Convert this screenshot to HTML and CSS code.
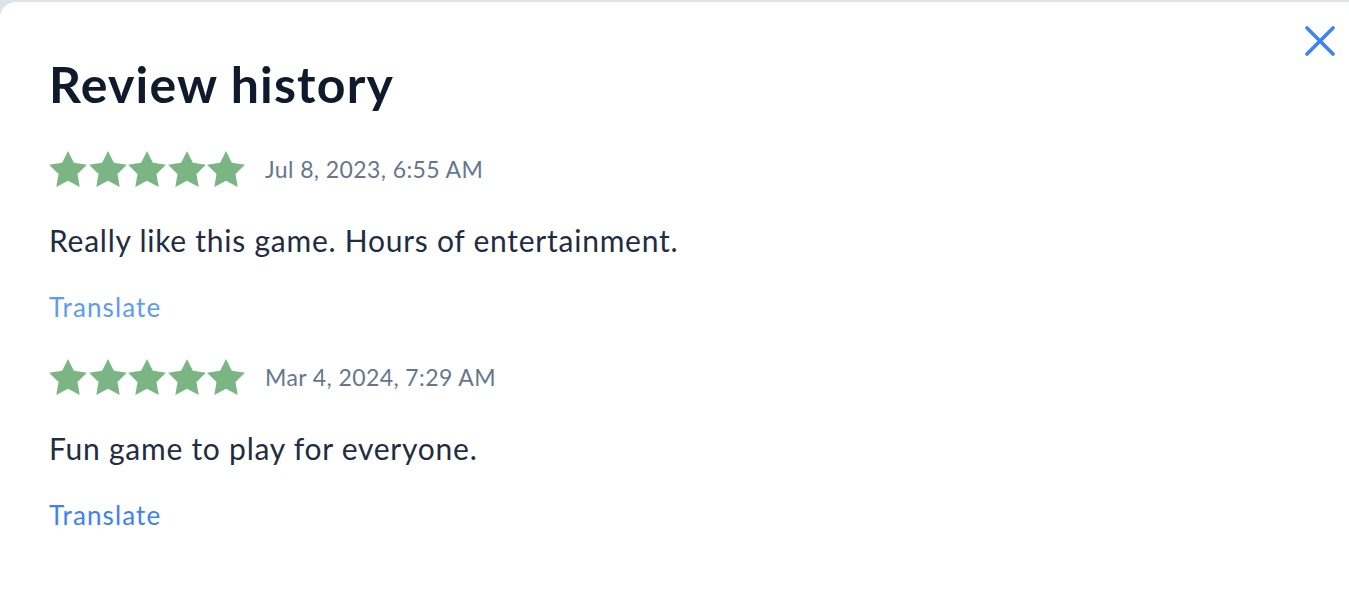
FILE: index.html
```html
<!DOCTYPE html>
<html lang="en">
<head>
<meta charset="utf-8">
<title>Review history</title>
<link rel="stylesheet" href="styles.css">
</head>
<body>
<div class="modal">
  <button class="close" aria-label="Close">
    <svg width="30" height="30" viewBox="0 0 30 30"><path d="M2 2 L28 28 M28 2 L2 28" stroke="#3f82f3" stroke-width="3.6" stroke-linecap="round" fill="none"/></svg>
  </button>
  <h1 class="title">Review history</h1>

  <div class="review">
    <div class="meta">
      <div class="stars">
        <svg class="star" viewBox="2 2 20 19.02"><polygon points="12,2 15.09,8.26 22,9.27 17,14.14 18.18,21.02 12,17.77 5.82,21.02 7,14.14 2,9.27 8.91,8.26"/></svg>
        <svg class="star" viewBox="2 2 20 19.02"><polygon points="12,2 15.09,8.26 22,9.27 17,14.14 18.18,21.02 12,17.77 5.82,21.02 7,14.14 2,9.27 8.91,8.26"/></svg>
        <svg class="star" viewBox="2 2 20 19.02"><polygon points="12,2 15.09,8.26 22,9.27 17,14.14 18.18,21.02 12,17.77 5.82,21.02 7,14.14 2,9.27 8.91,8.26"/></svg>
        <svg class="star" viewBox="2 2 20 19.02"><polygon points="12,2 15.09,8.26 22,9.27 17,14.14 18.18,21.02 12,17.77 5.82,21.02 7,14.14 2,9.27 8.91,8.26"/></svg>
        <svg class="star" viewBox="2 2 20 19.02"><polygon points="12,2 15.09,8.26 22,9.27 17,14.14 18.18,21.02 12,17.77 5.82,21.02 7,14.14 2,9.27 8.91,8.26"/></svg>
      </div>
      <span class="date">Jul 8, 2023, 6:55 AM</span>
    </div>
    <p class="text">Really like this game. Hours of entertainment.</p>
    <a class="translate light" href="#">Translate</a>
  </div>

  <div class="review">
    <div class="meta">
      <div class="stars">
        <svg class="star" viewBox="2 2 20 19.02"><polygon points="12,2 15.09,8.26 22,9.27 17,14.14 18.18,21.02 12,17.77 5.82,21.02 7,14.14 2,9.27 8.91,8.26"/></svg>
        <svg class="star" viewBox="2 2 20 19.02"><polygon points="12,2 15.09,8.26 22,9.27 17,14.14 18.18,21.02 12,17.77 5.82,21.02 7,14.14 2,9.27 8.91,8.26"/></svg>
        <svg class="star" viewBox="2 2 20 19.02"><polygon points="12,2 15.09,8.26 22,9.27 17,14.14 18.18,21.02 12,17.77 5.82,21.02 7,14.14 2,9.27 8.91,8.26"/></svg>
        <svg class="star" viewBox="2 2 20 19.02"><polygon points="12,2 15.09,8.26 22,9.27 17,14.14 18.18,21.02 12,17.77 5.82,21.02 7,14.14 2,9.27 8.91,8.26"/></svg>
        <svg class="star" viewBox="2 2 20 19.02"><polygon points="12,2 15.09,8.26 22,9.27 17,14.14 18.18,21.02 12,17.77 5.82,21.02 7,14.14 2,9.27 8.91,8.26"/></svg>
      </div>
      <span class="date">Mar 4, 2024, 7:29 AM</span>
    </div>
    <p class="text">Fun game to play for everyone.</p>
    <a class="translate" href="#">Translate</a>
  </div>
</div>
</body>
</html>
```

FILE: styles.css
```css
* { box-sizing: border-box; }
html, body {
  margin: 0;
  padding: 0;
  height: 100%;
  overflow: hidden;
  background: #dde3eb;
  font-family: Lato, "Open Sans", sans-serif;
}
.modal {
  position: relative;
  margin-top: 2px;
  height: calc(100% - 2px);
  background: #ffffff;
  border-top-left-radius: 16px;
  padding: 54px 49px 0 49px;
  display: flex;
  flex-direction: column;
  align-items: flex-start;
}
.close {
  position: absolute;
  top: 24px;
  right: 14px;
  width: 30px;
  height: 30px;
  padding: 0;
  border: 0;
  background: none;
  cursor: pointer;
  display: flex;
}
.title {
  margin: 0;
  font-size: 50px;
  line-height: 56px;
  font-weight: 700;
  color: #0f1b2d;
  letter-spacing: 1.2px;
}
.review {
  display: flex;
  flex-direction: column;
  align-items: flex-start;
  margin-top: 39px;
}
.review + .review { margin-top: 36px; }
.meta {
  display: flex;
  align-items: center;
  gap: 20px;
  height: 36px;
}
.stars {
  display: flex;
  gap: 1.5px;
}
.star {
  width: 38px;
  height: 36px;
  fill: #7bb583;
}
.date {
  font-size: 23px;
  color: #66768f;
  line-height: 28px;
  letter-spacing: 0.4px;
}
.text {
  margin: 35px 0 0 0;
  font-size: 30px;
  line-height: 36px;
  color: #1f2c44;
  letter-spacing: 0.75px;
}
.translate {
  margin-top: 33px;
  font-size: 26px;
  line-height: 32px;
  color: #3d82f4;
  text-decoration: none;
  letter-spacing: 1.1px;
}
.translate.light { color: #5c9bf7; }
```
